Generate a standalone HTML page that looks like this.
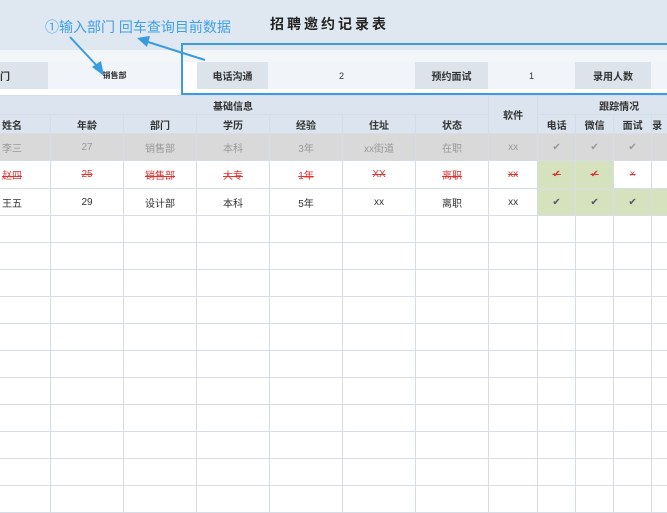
<!DOCTYPE html>
<html><head><meta charset="utf-8"><style>
*{margin:0;padding:0;box-sizing:border-box}
body{width:667px;height:500px;overflow:hidden;background:#fff;font-family:"Liberation Sans","Noto Sans CJK SC",sans-serif;position:relative}
.top{position:absolute;left:0;top:0;width:667px;height:50px;background:#dfe7f0}
.band{position:absolute;left:0;top:50px;width:667px;height:12px;background:#f3f6f9}
.info{position:absolute;top:62px;height:27px;font-size:10px;font-weight:bold;color:#333;display:flex;align-items:center;justify-content:center}
.lab{background:#dce3eb}
.val{background:#f1f5f9;font-weight:normal;font-size:9px}
table{position:absolute;left:-23px;top:95px;width:723px;border-collapse:collapse;table-layout:fixed;font-size:10px;color:#333}
td{border:1px solid #d6dde6;text-align:center;overflow:hidden;white-space:nowrap;padding:0}
.h td,.h2 td{background:#dce5ef;font-weight:bold}
.g td{background:#d9d9d9;color:#999}
.r td{color:#d33;text-decoration:line-through}
.gr{background:#d6e2bd !important}
.ck{color:#556;}
</style></head><body>
<div class="top"></div>
<div class="band"></div>
<div style="position:absolute;left:270px;top:14px;font-size:14px;font-weight:bold;letter-spacing:3px;color:#222">招聘邀约记录表</div>
<div style="position:absolute;left:45px;top:17px;font-size:14px;color:#3fa0e6">①输入部门 回车查询目前数据</div>
<div class="info lab" style="left:0;width:48px;justify-content:flex-start">门</div>
<div class="info val" style="left:48px;width:133px;font-weight:bold;font-size:8px">销售部</div>
<div class="info lab" style="left:197px;width:71px">电话沟通</div>
<div class="info val" style="left:268px;width:147px">2</div>
<div class="info lab" style="left:415px;width:73px">预约面试</div>
<div class="info val" style="left:488px;width:87px">1</div>
<div class="info lab" style="left:575px;width:76px">录用人数</div>
<div class="info val" style="left:651px;width:16px"></div>
<table>
<colgroup><col style="width:73px"><col style="width:73px"><col style="width:73px"><col style="width:73px"><col style="width:73px"><col style="width:73px"><col style="width:73px"><col style="width:49px"><col style="width:38px"><col style="width:38px"><col style="width:38px"><col style="width:49px"></colgroup>
<tr class="h" style="height:19px"><td colspan="7">基础信息</td><td rowspan="2">软件</td><td colspan="4">跟踪情况</td></tr>
<tr class="h2" style="height:19px"><td style="text-align:right;padding-right:28px">姓名</td><td>年龄</td><td>部门</td><td>学历</td><td>经验</td><td>住址</td><td>状态</td><td>电话</td><td>微信</td><td>面试</td><td style="text-align:left">录</td></tr>
<tr class="g" style="height:27px"><td style="text-align:right;padding-right:28px">李三</td><td>27</td><td>销售部</td><td>本科</td><td>3年</td><td>xx街道</td><td>在职</td><td>xx</td><td>✔</td><td>✔</td><td>✔</td><td></td></tr>
<tr class="r" style="height:28px"><td style="text-align:right;padding-right:28px">赵四</td><td>25</td><td>销售部</td><td>大专</td><td>1年</td><td>XX</td><td>离职</td><td>xx</td><td class="gr">✔</td><td class="gr">✔</td><td>×</td><td></td></tr>
<tr style="height:27px"><td style="text-align:right;padding-right:28px">王五</td><td>29</td><td>设计部</td><td>本科</td><td>5年</td><td>xx</td><td>离职</td><td>xx</td><td class="gr ck">✔</td><td class="gr ck">✔</td><td class="gr ck">✔</td><td class="gr"></td></tr>
<tr style="height:27px"><td></td><td></td><td></td><td></td><td></td><td></td><td></td><td></td><td></td><td></td><td></td><td></td></tr>
<tr style="height:27px"><td></td><td></td><td></td><td></td><td></td><td></td><td></td><td></td><td></td><td></td><td></td><td></td></tr>
<tr style="height:27px"><td></td><td></td><td></td><td></td><td></td><td></td><td></td><td></td><td></td><td></td><td></td><td></td></tr>
<tr style="height:27px"><td></td><td></td><td></td><td></td><td></td><td></td><td></td><td></td><td></td><td></td><td></td><td></td></tr>
<tr style="height:27px"><td></td><td></td><td></td><td></td><td></td><td></td><td></td><td></td><td></td><td></td><td></td><td></td></tr>
<tr style="height:27px"><td></td><td></td><td></td><td></td><td></td><td></td><td></td><td></td><td></td><td></td><td></td><td></td></tr>
<tr style="height:27px"><td></td><td></td><td></td><td></td><td></td><td></td><td></td><td></td><td></td><td></td><td></td><td></td></tr>
<tr style="height:27px"><td></td><td></td><td></td><td></td><td></td><td></td><td></td><td></td><td></td><td></td><td></td><td></td></tr>
<tr style="height:27px"><td></td><td></td><td></td><td></td><td></td><td></td><td></td><td></td><td></td><td></td><td></td><td></td></tr>
<tr style="height:27px"><td></td><td></td><td></td><td></td><td></td><td></td><td></td><td></td><td></td><td></td><td></td><td></td></tr>
<tr style="height:27px"><td></td><td></td><td></td><td></td><td></td><td></td><td></td><td></td><td></td><td></td><td></td><td></td></tr>
</table>
<div style="position:absolute;left:181px;top:43px;width:500px;height:52px;border:2px solid #3a9be0"></div>
<svg width="667" height="500" style="position:absolute;left:0;top:0">
<line x1="70" y1="37" x2="99" y2="68" stroke="#3a9be0" stroke-width="2"/>
<polygon points="104,76 92,67 101,61" fill="#3a9be0"/>
<line x1="205" y1="60" x2="148" y2="42" stroke="#3a9be0" stroke-width="2"/>
<polygon points="137,38 150,36 147,47" fill="#3a9be0"/>
</svg>
</body></html>
